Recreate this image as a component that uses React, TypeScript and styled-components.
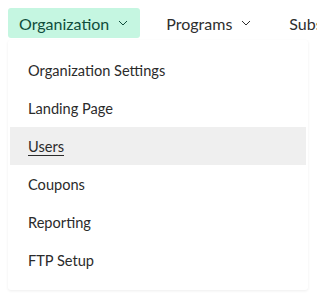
import React from 'react';
import styled, { createGlobalStyle } from 'styled-components';

const GlobalStyle = createGlobalStyle`
  html, body {
    margin: 0;
    padding: 0;
    background: #fff;
    font-family: Lato, 'Open Sans', sans-serif;
  }
`;

const Page = styled.div`
  width: 317px;
  height: 299px;
  overflow: hidden;
  padding: 8px 0 0 8px;
  box-sizing: border-box;
`;

const NavBar = styled.nav`
  display: flex;
  align-items: center;
  gap: 15px;
  white-space: nowrap;
`;

const NavItem = styled.button<{ $active?: boolean }>`
  display: flex;
  flex-shrink: 0;
  align-items: center;
  gap: 9px;
  height: 30px;
  padding: 0 12px 0 11px;
  border: none;
  border-radius: 3px;
  font-family: inherit;
  font-size: 16px;
  color: ${({ $active }) => ($active ? '#0f4d3b' : '#2e2e2e')};
  background: ${({ $active }) => ($active ? '#c5f6e1' : 'transparent')};
  cursor: pointer;
`;

const Menu = styled.ul`
  list-style: none;
  margin: 2px 0 0 0;
  padding: 11px 2px;
  width: 300px;
  box-sizing: border-box;
  background: #fff;
  border-radius: 3px;
  box-shadow: 0 1px 3px rgba(0, 0, 0, 0.07);
`;

const MenuItem = styled.li<{ $selected?: boolean }>`
  height: 38px;
  display: flex;
  align-items: center;
  padding-left: 18px;
  font-size: 14.6px;
  color: #2b2b2b;
  background: ${({ $selected }) => ($selected ? '#efefef' : 'transparent')};
  text-decoration: ${({ $selected }) => ($selected ? 'underline' : 'none')};
  text-underline-offset: 3px;
`;

const Chevron = () => (
  <svg width="10" height="6" viewBox="0 0 10 6" fill="none">
    <path d="M1 1l4 4 4-4" stroke="currentColor" strokeWidth="1" />
  </svg>
);

const items = [
  'Organization Settings',
  'Landing Page',
  'Users',
  'Coupons',
  'Reporting',
  'FTP Setup',
];

export default function App() {
  return (
    <Page>
      <GlobalStyle />
      <NavBar>
        <NavItem $active>
          Organization <Chevron />
        </NavItem>
        <NavItem>
          Programs <Chevron />
        </NavItem>
        <NavItem>Subscriptions</NavItem>
      </NavBar>
      <Menu>
        {items.map((label) => (
          <MenuItem key={label} $selected={label === 'Users'}>
            {label}
          </MenuItem>
        ))}
      </Menu>
    </Page>
  );
}
